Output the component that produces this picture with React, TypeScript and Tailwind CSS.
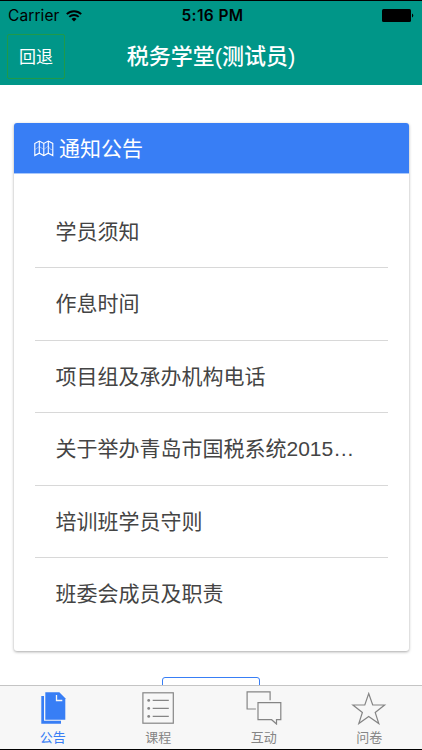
import { FC, ReactNode } from "react";
import { clsx } from "clsx";

const notices = [
  "学员须知",
  "作息时间",
  "项目组及承办机构电话",
  "关于举办青岛市国税系统2015…",
  "培训班学员守则",
  "班委会成员及职责",
];

const WifiIcon = () => (
  <svg width="16" height="12" viewBox="0 0 16 12" fill="none" stroke="#000" strokeWidth="1.9">
    <path d="M0.8 4.2a10.2 10.2 0 0 1 14.4 0" />
    <path d="M3.3 6.9a6.7 6.7 0 0 1 9.4 0" />
    <path d="M8 11.6 5.5 9.1a3.5 3.5 0 0 1 5 0Z" fill="#000" stroke="none" />
  </svg>
);

const BatteryIcon = () => (
  <svg width="32" height="13" viewBox="0 0 32 13">
    <rect width="29" height="13" rx="1.5" />
    <path d="M30 4.5a2.2 2.2 0 0 1 0 4Z" />
  </svg>
);

const MapIcon = () => (
  <svg width="20" height="17" viewBox="0 0 20 17" fill="none" stroke="#fff" strokeWidth="1.1">
    <path d="M0.8 3.4 5.3 1 9.8 3.4 14.3 1 18.8 3.4V15.6L14.3 13.2 9.8 15.6 5.3 13.2 0.8 15.6Z" />
    <path d="M5.3 1V13.2M9.8 3.4V15.6M14.3 1V13.2" />
    <path d="M1 9.5 5.3 6.5 9.8 9.5 14.3 6 16 9 18.8 10" strokeWidth="0.7" opacity="0.6" />
  </svg>
);

const CopyIcon = () => (
  <svg width="36" height="34" viewBox="0 0 36 34" fill="#387ef5">
    <path d="M6.3 5H9V29.8H26V32.7H6.3Z" />
    <path d="M10.3 1.3H24.3L30.3 7.3V28.8H10.3Z" />
    <path d="M21.5 4V9.5H27.3" fill="none" stroke="#f7f7f7" strokeWidth="1.3" />
  </svg>
);

const ListIcon = () => (
  <svg width="36" height="34" viewBox="0 0 36 34" fill="none" stroke="#858585" strokeWidth="1.2">
    <rect x="2.9" y="1.8" width="30.4" height="30.4" />
    <path d="M12.7 9.4H28.8M12.7 17.4H28.8M12.7 25.4H28.8" />
    <g fill="#858585" stroke="none">
      <circle cx="8.7" cy="9.4" r="1.4" />
      <circle cx="8.7" cy="17.4" r="1.4" />
      <circle cx="8.7" cy="25.4" r="1.4" />
    </g>
  </svg>
);

const ChatIcon = () => (
  <svg width="36" height="34" viewBox="0 0 36 34" fill="none" stroke="#858585" strokeWidth="1.2">
    <path d="M24.1 9.3V0.8H1.1V18H9.9" />
    <path d="M12 11.6H34.8V28.7H30.5V33L25.6 28.7H12Z" />
  </svg>
);

const StarIcon = () => (
  <svg width="36" height="34" viewBox="0 0 36 34" fill="none" stroke="#858585" strokeWidth="1.2">
    <path d="M17.7 2.5 21.7 14H33.6L24.2 21.5 27.8 32.6 17.7 25.6 7.8 32.6 11.4 21.5 1.9 14H13.8Z" />
  </svg>
);

interface TabProps {
  label: string;
  icon: ReactNode;
  active?: boolean;
}

const Tab: FC<TabProps> = ({ label, icon, active }) => (
  <a
    className={clsx(
      "flex flex-1 flex-col items-center pt-[5px] text-[13px] leading-[20px]",
      active ? "text-[#387ef5]" : "text-[#858585]"
    )}
  >
    {icon}
    <span className="mt-[3px]">{label}</span>
  </a>
);

const App = () => {
  return (
    <div className="flex h-[750px] w-[422px] flex-col overflow-hidden border-y border-black bg-white font-['Liberation_Sans','Noto_Sans_CJK_SC',sans-serif]">
      <header className="h-[84px] shrink-0 bg-[#009688]">
        <div className="grid h-[28px] grid-cols-3 items-center px-2 pt-px font-['Inter',sans-serif] text-[15.5px] text-black">
          <div className="flex items-center gap-[6px]">
            <span className="tracking-[0.1px]">Carrier</span>
            <WifiIcon />
          </div>
          <span className="pl-[3px] text-center font-semibold tracking-[0.4px]">5:16 PM</span>
          <div className="flex justify-end">
            <BatteryIcon />
          </div>
        </div>
        <div className="grid h-[56px] grid-cols-[58px_1fr_58px] items-center px-[7px] pb-[3px]">
          <button className="mt-[2px] h-[45px] rounded-[2px] border border-[#1f9a4a] pt-[2px] text-[17px] text-white">
            回退
          </button>
          <h1 className="pt-px text-center text-[22px] font-medium text-white">税务学堂(测试员)</h1>
        </div>
      </header>

      <main className="flex min-h-0 flex-1 flex-col items-center overflow-hidden pt-[38px]">
        <section className="h-[528px] w-[395px] shrink-0 overflow-hidden rounded-[3px] bg-white shadow-[0_1px_3px_rgba(0,0,0,0.35)]">
          <h2 className="flex h-[51px] items-center gap-[5.5px] border-b border-[#a9c8fb] bg-[#387ef5] pl-[20px] text-[21px] text-white">
            <MapIcon />
            <span className="pt-[2px]">通知公告</span>
          </h2>
          <ul className="px-[21px] pt-[21.5px]">
            {notices.map((notice) => (
              <li
                key={notice}
                className="h-[72.5px] border-b border-[#d8d8d8] pl-[21px] text-[21px] leading-[72.5px] whitespace-nowrap text-[#444] last:border-0"
              >
                {notice}
              </li>
            ))}
          </ul>
        </section>
        <button className="mt-[26px] h-[50px] w-[98px] shrink-0 rounded-[3px] border border-[#387ef5]" />
      </main>

      <nav className="flex h-[64px] shrink-0 border-t border-[#c4c4c4] bg-[#f7f7f7]">
        <Tab label="公告" icon={<CopyIcon />} active />
        <Tab label="课程" icon={<ListIcon />} />
        <Tab label="互动" icon={<ChatIcon />} />
        <Tab label="问卷" icon={<StarIcon />} />
      </nav>
    </div>
  );
};

export default App;
